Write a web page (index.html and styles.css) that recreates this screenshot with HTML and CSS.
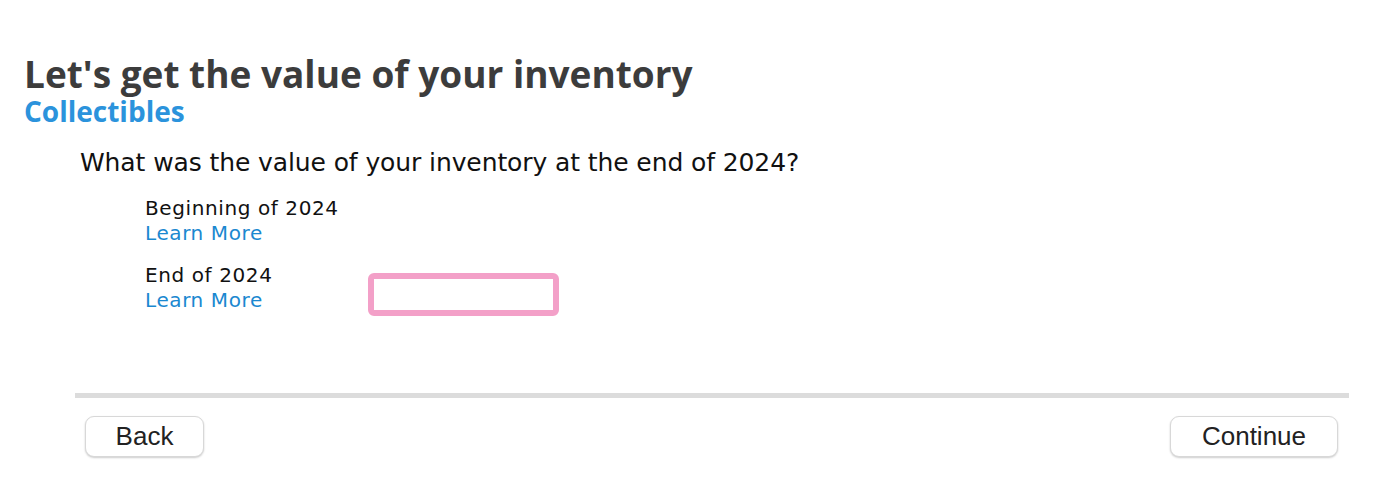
FILE: index.html
```html
<!DOCTYPE html>
<html>
<head>
<meta charset="utf-8">
<link rel="stylesheet" href="styles.css">
</head>
<body>
<div class="page">
  <header class="head">
    <h1 class="title">Let's get the value of your inventory</h1>
    <div class="subtitle">Collectibles</div>
  </header>
  <main class="content">
    <p class="question">What was the value of your inventory at the end of 2024?</p>
    <div class="rows">
      <div class="row">
        <div class="label">
          <div class="label-text">Beginning of 2024</div>
          <a class="learn" href="#">Learn More</a>
        </div>
      </div>
      <div class="row">
        <div class="label">
          <div class="label-text">End of 2024</div>
          <a class="learn" href="#">Learn More</a>
        </div>
        <input class="field" type="text">
      </div>
    </div>
  </main>
  <footer class="foot">
    <div class="rule"></div>
    <div class="buttons">
      <button class="btn btn-back">Back</button>
      <button class="btn btn-continue">Continue</button>
    </div>
  </footer>
</div>
</body>
</html>
```
FILE: styles.css
```css
html, body {
  margin: 0;
  padding: 0;
  background: #ffffff;
}
.page {
  width: 1394px;
  height: 490px;
  font-family: "DejaVu Sans", "Liberation Sans", sans-serif;
  color: #111;
  overflow: hidden;
}
.head {
  padding: 54px 0 0 24px;
}
.title {
  margin: 0;
  font-family: "Open Sans", "DejaVu Sans", sans-serif;
  font-weight: 700;
  font-size: 37px;
  line-height: 40px;
  color: #3c3c3c;
}
.subtitle {
  font-family: "Open Sans", "DejaVu Sans", sans-serif;
  font-weight: 700;
  font-size: 28px;
  line-height: 34px;
  color: #2b93dc;
}
.content {
  padding-left: 80px;
}
.question {
  margin: 21px 0 0;
  font-size: 25px;
  line-height: 28px;
  letter-spacing: -0.1px;
  color: #111;
}
.rows {
  padding-left: 65px;
  margin-top: 19px;
  display: flex;
  flex-direction: column;
  gap: 17px;
}
.row {
  display: flex;
  align-items: flex-start;
}
.label {
  flex: 0 0 223px;
  font-size: 20px;
  line-height: 25px;
  letter-spacing: 0.6px;
}
.label-text {
  color: #111;
}
.learn {
  display: block;
  color: #1a88d0;
  text-decoration: none;
}
.field {
  -webkit-appearance: none;
  appearance: none;
  flex: 0 0 auto;
  display: block;
  width: 191px;
  height: 43px;
  box-sizing: border-box;
  border: 6px solid #f3a0c8;
  border-radius: 6px;
  padding: 0;
  margin: 10px 0 0 0;
  background: #fff;
  outline: none;
}
.foot {
  padding: 0 45px 0 75px;
  margin-top: 77px;
}
.rule {
  height: 5px;
  background: #dcdcdc;
}
.buttons {
  display: flex;
  justify-content: space-between;
  padding: 18px 11px 0 10px;
}
.btn {
  height: 41px;
  border: 1px solid #d8d8d8;
  border-radius: 9px;
  background: #fff;
  box-shadow: 0 1px 2px rgba(0,0,0,0.2);
  font-family: "Liberation Sans", "Inter", sans-serif;
  font-size: 26px;
  color: #222;
  padding: 0;
}
.btn-back {
  width: 119px;
}
.btn-continue {
  width: 168px;
}
```
